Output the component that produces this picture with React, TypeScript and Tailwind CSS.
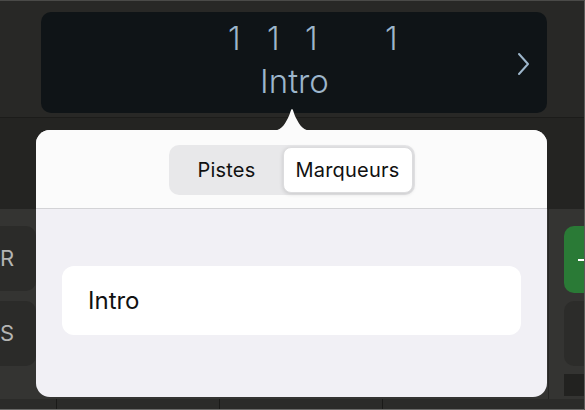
export default function App() {
  return (
    <div className="relative w-[585px] h-[410px] overflow-hidden bg-[#252523] font-['Inter',sans-serif]">
      <div className="flex flex-col h-full border-t border-[#4a4a48] border-r border-r-[#5a5a58]">
        {/* top strip with display */}
        <div className="flex flex-col h-[208px] bg-[#242422]">
          <div className="pt-[11px] pl-[41px] h-[116px] bg-[#282826]">
            <div className="relative w-[506px] h-[101px] rounded-[10px] bg-[#0f1417] text-[#9db6cb] font-light">
              <div className="flex pt-[7px] pl-[187px] text-[32px] leading-[40px]">
                <span className="w-[39px]">1</span>
                <span className="w-[38px]">1</span>
                <span className="w-[80px]">1</span>
                <span>1</span>
              </div>
              <div className="text-center pl-[1px] text-[33px] leading-[40px] mt-[2px]">Intro</div>
              <svg
                className="absolute right-[16px] top-[40px]"
                width="14"
                height="24"
                viewBox="0 0 14 24"
                fill="none"
              >
                <path d="M2 2l9 10-9 10" stroke="#9db6cb" strokeWidth="2" strokeLinecap="round" strokeLinejoin="round" />
              </svg>
            </div>
          </div>
          <div className="h-px bg-[#1c1c1a]" />
        </div>

        {/* lower area */}
        <div className="flex flex-1 bg-[#343432]">
          <div className="flex flex-col gap-[10px] w-[36px] pt-[17px]">
            <div className="flex items-center h-[65px] -ml-[20px] pl-[20px] rounded-r-[10px] bg-[#2b2b29] text-[#b5b5b3] text-[22px]">R</div>
            <div className="flex items-center h-[65px] -ml-[20px] pl-[20px] rounded-r-[10px] bg-[#2b2b29] text-[#b5b5b3] text-[22px]">S</div>
          </div>
          <div className="flex-1" />
          <div className="w-px bg-[#262624]" />
          <div className="flex flex-col gap-[8px] w-[35px] pt-[17px] pl-[15px]">
            <div className="flex items-center h-[67px] rounded-l-[10px] bg-[#2a7a36] pl-[14px]">
              <div className="w-[10px] h-[2px] bg-white" />
            </div>
            <div className="h-[65px] rounded-l-[10px] bg-[#2c2c2a]" />
            <div className="h-[22px] bg-[#222220]" />
          </div>
        </div>

        {/* bottom strip */}
        <div className="flex h-[11px] bg-[#2b2b29] border-b border-[#6a6a68]">
          <div className="w-[57px] border-r border-[#1a1a18]" />
          <div className="w-[163px] border-r border-[#1a1a18]" />
          <div className="w-[163px] border-r border-[#1a1a18]" />
        </div>
      </div>

      {/* popover */}
      <div className="absolute left-[36px] top-[130px] w-[511px] h-[267px]">
        <svg className="absolute left-[236px] -top-[22px]" width="40" height="23" viewBox="0 0 40 23">
          <path d="M0 23 C8 23 12 18 16 10 C18 6 19 1 20 1 C21 1 22 6 24 10 C28 18 32 23 40 23 Z" fill="#fbfbfb" />
        </svg>
        <div className="flex flex-col h-full rounded-[14px] overflow-hidden bg-[#f1f0f5]">
          <div className="flex justify-center pt-[15px] h-[79px] bg-[#fbfbfb] border-b border-[#d3d3d6]">
            <div className="flex w-[246px] h-[50px] p-[2px] rounded-[10px] bg-[#e8e8ea] text-[20px] tracking-[0.2px] text-[#111]">
              <div className="flex items-center justify-center w-[112px]">Pistes</div>
              <div className="flex items-center justify-center flex-1 rounded-[8px] bg-white shadow-[0_1px_4px_rgba(0,0,0,0.15)] border border-[#dcdcde]">
                Marqueurs
              </div>
            </div>
          </div>
          <div className="px-[26px] pt-[57px]">
            <div className="flex items-center h-[69px] px-[26px] rounded-[12px] bg-white text-[24px] text-[#111]">Intro</div>
          </div>
        </div>
      </div>
    </div>
  );
}
